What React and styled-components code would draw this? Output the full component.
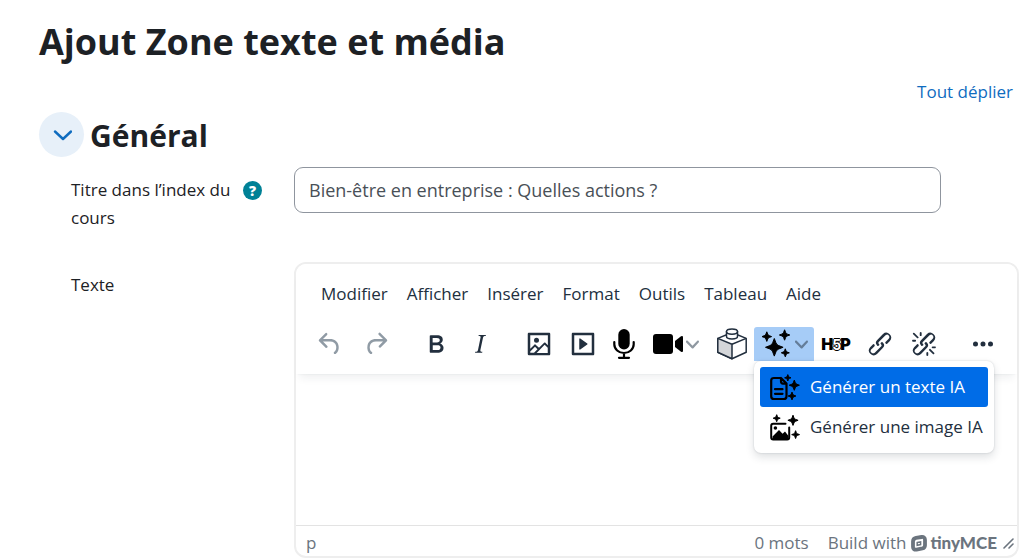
import React from "react";
import styled, { createGlobalStyle } from "styled-components";

const GlobalStyle = createGlobalStyle`
  *, *::before, *::after { box-sizing: border-box; }
  body {
    margin: 0;
    background: #fff;
    color: #1d2125;
    font-family: "Open Sans", "Noto Sans", sans-serif;
    font-size: 17px;
    line-height: 28px;
  }
  button { font: inherit; color: inherit; border: 0; background: none; padding: 0; cursor: pointer; }
  svg { display: block; }
`;

const Page = styled.main`
  padding: 18px 6px 0 39px;
`;

const Title = styled.h1`
  margin: 0;
  font-size: 36px;
  line-height: 48px;
  font-weight: 700;
`;

const ExpandRow = styled.div`
  display: flex;
  justify-content: flex-end;
  padding: 12px 6px 0 0;
`;

const ExpandLink = styled.a`
  color: #0f6cbf;
  text-decoration: none;
`;

const SectionHeader = styled.div`
  display: flex;
  align-items: center;
  gap: 6px;
  margin-top: 6px;
`;

const CollapseButton = styled.button`
  display: grid;
  place-items: center;
  width: 45px;
  height: 45px;
  border-radius: 50%;
  background: #e7f0f9;
  color: #0f6cbf;
`;

const SectionTitle = styled.h2`
  margin: 0;
  padding-top: 3px;
  font-size: 30px;
  line-height: 40px;
  font-weight: 700;
`;

const FormRow = styled.div`
  display: grid;
  grid-template-columns: 223px minmax(0, 1fr);
  padding-left: 32px;
  margin-top: ${(p) => p.$top}px;
`;

const LabelCell = styled.div`
  display: flex;
  align-items: flex-start;
  gap: 4px;
  padding-top: 9px;
`;

const Label = styled.label`
  max-width: 168px;
`;

const HelpButton = styled.button`
  display: grid;
  place-items: center;
  width: 19px;
  height: 19px;
  margin-top: 5px;
  border-radius: 50%;
  background: #008196;
  color: #fff;
  font-size: 14px;
  line-height: 19px;
  font-weight: 800;
`;

const TitleInput = styled.input`
  height: 46px;
  margin-right: 78px;
  padding: 0 14px;
  border: 1px solid #8f959e;
  border-radius: 9px;
  background: #fff;
  color: #495057;
  font: inherit;
  font-size: 18px;
`;

const Editor = styled.div`
  border: 2px solid #eee;
  border-radius: 12px;
`;

const EditorHeader = styled.div`
  position: relative;
  height: 110px;
  border-radius: 10px 10px 0 0;
  background: #fff;
  box-shadow: 0 2px 2px -2px rgba(34, 47, 62, 0.1), 0 8px 8px -4px rgba(34, 47, 62, 0.07);
  color: #222f3e;
`;

const MenuBar = styled.div`
  display: flex;
  gap: 19px;
  padding: 16px 25px 0;
`;

const Toolbar = styled.div`
  display: flex;
  gap: 15px;
  padding: 19px 11px 0;
`;

const ToolGroup = styled.div`
  display: flex;
`;

const ToolButton = styled.button`
  display: flex;
  align-items: center;
  justify-content: center;
  gap: ${(p) => p.$gap || 0}px;
  width: ${(p) => p.$width || 44}px;
  height: 34px;
  border-radius: 3px 3px 0 0;
  background: ${(p) => (p.$active ? "#a6ccf7" : "transparent")};
  color: ${(p) => (p.$faded ? "#909ba5" : "#222f3e")};
`;

const H5PMark = styled.span`
  font-family: Inter, sans-serif;
  font-size: 16px;
  font-weight: 900;
  color: #000;
`;

const H5PDigit = styled.span`
  margin: 0 -1px;
  font-size: 14px;
  font-weight: 700;
  color: #fff;
  text-shadow: -1px 0 #000, 1px 0 #000, 0 1px #000, 0 -1px #000;
`;

const MenuAnchor = styled.div`
  position: relative;
`;

const DropMenu = styled.div`
  position: absolute;
  z-index: 2;
  top: 34px;
  left: 0;
  width: 240px;
  padding: 6px;
  border-radius: 7px;
  background: #fff;
  box-shadow: 0 0 2px rgba(34, 47, 62, 0.2), 0 4px 8px rgba(34, 47, 62, 0.15);
`;

const DropItem = styled.button`
  display: flex;
  align-items: center;
  gap: 10px;
  width: 100%;
  height: 40px;
  padding-left: 10px;
  border-radius: 3px;
  white-space: nowrap;
  background: ${(p) => (p.$selected ? "#006ce7" : "transparent")};
  color: ${(p) => (p.$selected ? "#fff" : "#222f3e")};
`;

const EditArea = styled.div`
  height: 151px;
  outline: 0;
`;

const StatusBar = styled.div`
  display: flex;
  align-items: center;
  height: 31px;
  padding: 4px 3px 0 10px;
  border-top: 1px solid #e3e3e3;
  color: #6b747e;
  line-height: 26px;
`;

const StatusPath = styled.span`
  flex: 1;
`;

const Branding = styled.a`
  display: flex;
  align-items: center;
  gap: 5px;
  margin: 0 6px 0 19px;
  color: inherit;
  text-decoration: none;
`;

const BrandName = styled.span`
  display: flex;
  align-items: center;
  gap: 3px;
  font-family: Lato, sans-serif;
  font-weight: 900;
`;

const P = {
  undo: "M6.4 8H12c3.7 0 6.2 2 6.8 5.1.6 2.7-.4 5.6-2.3 6.8a1 1 0 0 1-1-1.8c1.1-.6 1.8-2.7 1.4-4.6-.5-2.1-2.1-3.5-4.9-3.5H6.4l3.3 3.3a1 1 0 1 1-1.4 1.4l-5-5a1 1 0 0 1 0-1.4l5-5a1 1 0 0 1 1.4 1.4L6.4 8Z",
  redo: "M17.6 10H12c-2.8 0-4.4 1.4-4.9 3.5-.4 2 .3 4 1.4 4.6a1 1 0 1 1-1 1.8c-2-1.2-2.9-4.1-2.3-6.8.6-3 3-5.1 6.8-5.1h5.6l-3.3-3.3a1 1 0 1 1 1.4-1.4l5 5a1 1 0 0 1 0 1.4l-5 5a1 1 0 0 1-1.4-1.4l3.3-3.3Z",
  bold: "M7.8 19c-.3 0-.5 0-.6-.2l-.2-.5V5.7c0-.2 0-.4.2-.5l.6-.2h5c1.5 0 2.7.3 3.5 1 .7.6 1.1 1.4 1.1 2.5a3 3 0 0 1-.6 1.9c-.4.6-1 1-1.6 1.2.4.1.9.3 1.3.6s.8.7 1 1.2c.4.4.5 1 .5 1.6 0 1.3-.4 2.3-1.3 3-.8.7-2.1 1-3.8 1H7.8Zm5-8.3c.6 0 1.2-.1 1.6-.5.4-.3.6-.7.6-1.3 0-1.1-.8-1.7-2.3-1.7H9.3v3.5h3.4Zm.5 6c.7 0 1.3-.1 1.7-.4.4-.4.6-.9.6-1.5s-.2-1-.7-1.4c-.4-.3-1-.4-2-.4H9.4v3.8h4Z",
  italic: "m16.7 4.7-.1.9h-.3c-.6 0-1 0-1.4.3-.3.3-.4.6-.5 1.1l-2.1 9.8v.6c0 .5.4.8 1.4.8h.2l-.2.8H8l.2-.8h.2c1.1 0 1.8-.5 2-1.5l2-9.8.1-.5c0-.6-.4-.8-1.4-.8h-.3l.2-.9h5.8Z",
  image: "m5 15.7 3.3-3.2c.3-.3.7-.3 1 0L12 15l4.1-4c.3-.4.8-.4 1 0l2 1.9V5H5v10.7ZM5 18V19h3l2.8-2.9-2-2L5 17.9Zm14-3-2.5-2.4-6.4 6.5H19v-4ZM4 3h16c.6 0 1 .4 1 1v16c0 .6-.4 1-1 1H4a1 1 0 0 1-1-1V4c0-.6.4-1 1-1Zm6 8a2 2 0 1 0 0-4 2 2 0 0 0 0 4Z",
  media: "M4 3h16c.6 0 1 .4 1 1v16c0 .6-.4 1-1 1H4a1 1 0 0 1-1-1V4c0-.6.4-1 1-1Zm1 2v14h14V5H5Zm4.8 2.6 5.6 4a.5.5 0 0 1 0 .8l-5.6 4A.5.5 0 0 1 9 16V8a.5.5 0 0 1 .8-.4Z",
  link: "M6.2 12.3a1 1 0 0 1 1.4 1.4l-2 2a2 2 0 1 0 2.6 2.8l4.8-4.8a1 1 0 0 0 0-1.4 1 1 0 1 1 1.4-1.3 2.9 2.9 0 0 1 0 4L9.6 20a3.9 3.9 0 0 1-5.5-5.5l2-2Zm11.6-.6a1 1 0 0 1-1.4-1.4l2-2a2 2 0 1 0-2.6-2.8L11 10.3a1 1 0 0 0 0 1.4A1 1 0 1 1 9.6 13a2.9 2.9 0 0 1 0-4L14.4 4a3.9 3.9 0 0 1 5.5 5.5l-2 2Z",
  rays: "M7.6 6.3a.8.8 0 0 1-1 1.1L3.3 4.2a.7.7 0 1 1 1-1l3.2 3.1ZM5.1 8.6a.8.8 0 0 1 0 1.5H3a.8.8 0 0 1 0-1.5H5Zm5-3.5a.8.8 0 0 1-1.5 0V3a.8.8 0 0 1 1.5 0V5Zm6 11.8a.8.8 0 0 1 1-1l3.2 3.2a.8.8 0 0 1-1 1L16 17Zm-2.2 2a.8.8 0 0 1 1.5 0V21a.8.8 0 0 1-1.5 0V19Zm5-3.5a.7.7 0 1 1 0-1.5H21a.8.8 0 0 1 0 1.5H19Z",
  more: "M6 10a2 2 0 1 0 0 4 2 2 0 0 0 0-4Zm12 0a2 2 0 1 0 0 4 2 2 0 0 0 0-4Zm-6 0a2 2 0 1 0 0 4 2 2 0 0 0 0-4Z",
};

const Glyph = ({ d }) => (
  <svg width="30" height="30" viewBox="0 0 24 24" fill="currentColor" aria-hidden="true">
    <path d={d} />
  </svg>
);

const Chevron = ({ color = "#8f98a1" }) => (
  <svg width="13" height="13" viewBox="0 0 10 10" fill={color} aria-hidden="true">
    <path d="M8.7 2.2c.3-.3.8-.3 1 0 .4.4.4.9 0 1.2L5.7 7.8c-.3.3-.9.3-1.2 0L.2 3.4a.8.8 0 0 1 0-1.2c.3-.3.8-.3 1.1 0L5 6l3.7-3.8Z" />
  </svg>
);

// Four-pointed star centred on (x, y); k sets how wide its waist is.
const Spark = ({ x, y, r }) => {
  const k = r * 0.31;
  return (
    <path
      stroke="#000"
      strokeWidth="1"
      strokeLinejoin="round"
      d={`M${x} ${y - r}Q${x + k * 0.7} ${y - k * 1.2} ${x + k} ${y - k}Q${x + k * 1.2} ${y - k * 0.7} ${x + r} ${y}Q${x + k * 1.2} ${y + k * 0.7} ${x + k} ${y + k}Q${x + k * 0.7} ${y + k * 1.2} ${x} ${y + r}Q${x - k * 0.7} ${y + k * 1.2} ${x - k} ${y + k}Q${x - k * 1.2} ${y + k * 0.7} ${x - r} ${y}Q${x - k * 1.2} ${y - k * 0.7} ${x - k} ${y - k}Q${x - k * 0.7} ${y - k * 1.2} ${x} ${y - r}Z`}
    />
  );
};

const SparklesIcon = () => (
  <svg width="30" height="32" viewBox="1 0 30 32" aria-hidden="true">
    <Spark x={14.3} y={19.3} r={8.8} />
    <Spark x={24.6} y={7} r={5.2} />
    <Spark x={6.8} y={8.6} r={4.8} />
    <Spark x={25.3} y={24.8} r={4} />
  </svg>
);

const MicIcon = () => (
  <svg width="22" height="30" viewBox="0 0 22 30" aria-hidden="true">
    <rect x="5.3" width="11.4" height="20.5" rx="5.7" />
    <path d="M1.3 13v2.3a9.7 8.7 0 0 0 19.4 0V13M11 24v4.6M6 28.8h10" fill="none" stroke="#000" strokeWidth="2.2" strokeLinecap="round" />
  </svg>
);

const VideoIcon = () => (
  <svg width="31" height="20" viewBox="0 0 31 20" aria-hidden="true">
    <rect width="20" height="20" rx="3" />
    <path d="M22 7l6-4.7q2-1 2 1v13.4q0 2-2 1L22 13Z" />
  </svg>
);

const BrickIcon = () => (
  <svg width="30" height="34" viewBox="0 0 30 34" fill="#fff" stroke="#222f3e" strokeWidth="1.5" strokeLinejoin="round" aria-hidden="true">
    <path d="M15 5.5 29.2 11.4v13.8L15 31.8.8 25.2V11.4Z" />
    <path d="M.8 11.4 15 17.2v14.6L.8 25.2Z" fill="#d4d6d9" />
    <path d="M15 17.2 29.2 11.4" />
    <path d="M9.5 4.6v5c0 3.2 11 3.2 11 0v-5Z" />
    <ellipse cx="15" cy="4.6" rx="5.5" ry="2.6" />
  </svg>
);

const TextAiIcon = () => (
  <svg width="30" height="27" viewBox="0 0 30 27" aria-hidden="true">
    <path d="M11 4H4Q1.2 4 1.2 6.5v15.7Q1.2 25 4 25h9.7q2.8 0 2.8-2.8V9.6L11 4v3.6q0 2 2 2h3M5 15.2h7.5M5 19.8h7.5" fill="none" stroke="#000" strokeWidth="2.2" strokeLinejoin="round" strokeLinecap="round" />
    <Spark x={17.8} y={3.8} r={3.2} />
    <Spark x={24.3} y={11.2} r={5.1} />
    <Spark x={22} y={22} r={3.9} />
  </svg>
);

const ImageAiIcon = () => (
  <svg width="30" height="27" viewBox="0 0 30 27" aria-hidden="true">
    <path d="M15.5 9.7H3.2Q1.2 9.7 1.2 11.7v11.8q0 2 2 2h14q2 0 2-2V13.5" fill="none" stroke="#000" strokeWidth="2" strokeLinecap="round" />
    <circle cx="5.4" cy="14" r="1.8" />
    <path d="M2.5 25v-2.5L9 16l3.6 3.8 2.4-2.4L18.5 22v3Z" />
    <Spark x={6.7} y={4.2} r={3.5} />
    <Spark x={23} y={6.3} r={5.1} />
    <Spark x={25.6} y={20.6} r={3.9} />
  </svg>
);

const TinyLogo = () => (
  <svg width="16" height="17" viewBox="0 0 16 17" fill="none" stroke="#6b747e" aria-hidden="true">
    <path d="M5 2.8 10.6 2Q14 1.7 14 5v5.2q0 2.6-2.6 3.2L5.6 14.6Q2 15 2 12V6.6Q2 3.4 5 2.8Z" strokeWidth="3.8" />
    <path d="M6.2 7.6 9.6 6.9V9.6L6.2 10.3Z" strokeWidth="1.5" />
  </svg>
);

const ResizeIcon = () => (
  <svg width="11" height="11" viewBox="0 0 11 11" stroke="#6b747e" strokeWidth="1.6" strokeLinecap="round" aria-hidden="true">
    <path d="M1 10 10 1M6 10l4-4" />
  </svg>
);

const menus = ["Modifier", "Afficher", "Insérer", "Format", "Outils", "Tableau", "Aide"];

export default function App() {
  return (
    <>
      <GlobalStyle />
      <Page>
        <Title>Ajout Zone texte et média</Title>
        <ExpandRow>
          <ExpandLink href="#general">Tout déplier</ExpandLink>
        </ExpandRow>
        <SectionHeader id="general">
          <CollapseButton aria-label="Replier Général" aria-expanded="true">
            <svg width="20" height="12" viewBox="0 0 20 12" fill="none" stroke="currentColor" strokeWidth="2.4" strokeLinecap="round" strokeLinejoin="round" aria-hidden="true">
              <path d="m3 2.5 8 7.5 8-7.5" />
            </svg>
          </CollapseButton>
          <SectionTitle>Général</SectionTitle>
        </SectionHeader>

        <FormRow $top={10}>
          <LabelCell>
            <Label htmlFor="index-title">Titre dans l’index du cours</Label>
            <HelpButton type="button" aria-label="Aide sur le titre">?</HelpButton>
          </LabelCell>
          <TitleInput id="index-title" defaultValue="Bien-être en entreprise : Quelles actions ?" />
        </FormRow>

        <FormRow $top={30}>
          <LabelCell>
            <Label id="text-label">Texte</Label>
          </LabelCell>
          <Editor>
            <EditorHeader>
              <MenuBar role="menubar">
                {menus.map((m) => (
                  <button key={m} type="button" role="menuitem">{m}</button>
                ))}
              </MenuBar>
              <Toolbar role="toolbar">
                <ToolGroup>
                  <ToolButton $faded $width={46} aria-label="Annuler"><Glyph d={P.undo} /></ToolButton>
                  <ToolButton $faded $width={46} aria-label="Rétablir"><Glyph d={P.redo} /></ToolButton>
                </ToolGroup>
                <ToolGroup>
                  <ToolButton aria-label="Gras"><Glyph d={P.bold} /></ToolButton>
                  <ToolButton aria-label="Italique"><Glyph d={P.italic} /></ToolButton>
                </ToolGroup>
                <ToolGroup>
                  <ToolButton aria-label="Image"><Glyph d={P.image} /></ToolButton>
                  <ToolButton aria-label="Multimédia"><Glyph d={P.media} /></ToolButton>
                  <ToolButton $width={37} aria-label="Enregistrer l’audio"><MicIcon /></ToolButton>
                  <ToolButton $width={68} $gap={2} aria-label="Enregistrer la vidéo">
                    <VideoIcon />
                    <Chevron />
                  </ToolButton>
                  <ToolButton aria-label="Contenu"><BrickIcon /></ToolButton>
                  <MenuAnchor>
                    <ToolButton $active $width={60} $gap={4} aria-label="IA" aria-haspopup="menu" aria-expanded="true">
                      <SparklesIcon />
                      <Chevron color="#647d99" />
                    </ToolButton>
                    <DropMenu role="menu">
                      <DropItem $selected role="menuitem">
                        <TextAiIcon />
                        Générer un texte IA
                      </DropItem>
                      <DropItem role="menuitem">
                        <ImageAiIcon />
                        Générer une image IA
                      </DropItem>
                    </DropMenu>
                  </MenuAnchor>
                  <ToolButton>
                    <H5PMark>H<H5PDigit>5</H5PDigit>P</H5PMark>
                  </ToolButton>
                  <ToolButton aria-label="Lien"><Glyph d={P.link} /></ToolButton>
                  <ToolButton aria-label="Supprimer le lien"><Glyph d={P.link + P.rays} /></ToolButton>
                </ToolGroup>
                <ToolGroup>
                  <ToolButton aria-label="Plus"><Glyph d={P.more} /></ToolButton>
                </ToolGroup>
              </Toolbar>
            </EditorHeader>
            <EditArea contentEditable suppressContentEditableWarning role="textbox" aria-labelledby="text-label" />
            <StatusBar>
              <StatusPath>p</StatusPath>
              <span>0 mots</span>
              <Branding href="#tiny">
                Build with
                <BrandName><TinyLogo />tinyMCE</BrandName>
              </Branding>
              <ResizeIcon />
            </StatusBar>
          </Editor>
        </FormRow>
      </Page>
    </>
  );
}
